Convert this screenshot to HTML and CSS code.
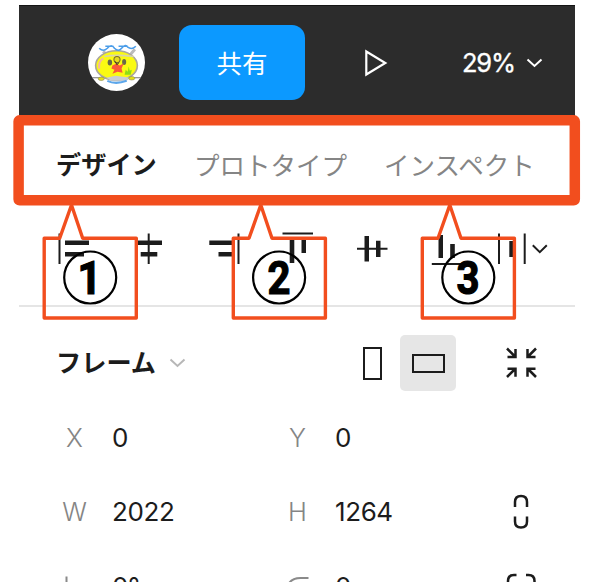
FILE: index.html
```html
<!DOCTYPE html>
<html lang="ja">
<head>
<meta charset="utf-8">
<title>デザインパネル</title>
<link rel="stylesheet" href="styles.css">
</head>
<body>
<main class="panel">
  <header class="header">
    <svg class="avatar" viewBox="0 0 56 56">
      <circle cx="28" cy="28" r="28" fill="#fff"/>
      <path d="M4 43h48" stroke="#777" stroke-width="1"/>
      <path d="M15 17l4 5M46 15l-5 6" stroke="#bbb" stroke-width="3"/>
      <ellipse cx="28" cy="31" rx="20.5" ry="14.5" fill="#fafa12" stroke="#aaa69d" stroke-width="1.6"/>
      <path d="M16 22q12-2 29 0" stroke="#d6d3ae" stroke-width="1.5" fill="none"/>
      <path d="M11 14q4 4 8 0q4-5 7 0q4 4 7 0q4-5 6-1q4 3 8-1M17 12h8M30 12h9" fill="none" stroke="#4b9de9" stroke-width="1.5"/>
      <path d="M11 34q-1-7 4-10" stroke="#f1b8a2" stroke-width="2" fill="none"/>
      <ellipse cx="21.500" cy="28" rx="2.200" ry="3" fill="#686849"/><ellipse cx="35.500" cy="27.500" rx="2" ry="3" fill="#686849"/>
      <circle cx="28.500" cy="25" r="3" fill="#e8dc1d" stroke="#776a2d"/>
      <path d="M24 31l4-2 3 2 4-2-2 5 1 4-5-1-5 2 2-4-3-1z" fill="#fa5938"/>
      <path d="M26.500 27l2 3 2-2" stroke="#412f28" fill="none"/>
      <path d="M36 40l1-5 2 2 1-5 1 4 2-1-1 5z" fill="#8edd16"/>
      <path d="M18 43l9-2 15 2-4 3H23z" fill="#c9cdd0"/>
      <path d="M19 46q8 4 19 0" fill="none" stroke="#5ba6eb" stroke-width="2"/>
      <ellipse cx="13" cy="44" rx="3" ry="1.700" fill="#e4df13" stroke="#8a8958" stroke-width=".6"/><ellipse cx="43" cy="43.500" rx="3" ry="1.700" fill="#e4df13" stroke="#8a8958" stroke-width=".6"/>
    </svg>
    <button class="share">共有</button>
    <svg class="play" viewBox="0 0 24 28"><path d="M2.300 2.500v23l19-11.500z"/></svg>
    <span class="zoom">29%</span>
    <svg class="chevron" viewBox="0 0 17 10"><path d="M1.500 1.500l7 6.500 7-6.500"/></svg>
  </header>

  <nav class="tabs">
    <span class="tab active">デザイン</span>
    <span class="tab prototype">プロトタイプ</span>
    <span class="tab inspect">インスペクト</span>
  </nav>

  <section class="align">
    <svg viewBox="54 228 40 40"><path d="M58.500 233.500h2v30.500h-2zM65 240.500h24v4.500h-24zM65 252h19v4.500h-19z"/></svg>
    <svg viewBox="129 228 40 40"><path d="M147.700 233.500h2v30.500h-2zM136 240.500h26v4.500h-26zM140.700 252h16.600v4.500h-16.600z"/></svg>
    <svg viewBox="204 228 40 40"><path d="M237.500 233.500h2v30.500h-2zM209.300 240.500h23.700v4.500h-23.700zM218.500 252h14.500v4.500h-14.500z"/></svg>
    <svg viewBox="278 228 40 40"><path d="M282.500 232.500h30.500v2h-30.500zM289.700 239.500h4.600v23.500h-4.600zM301.500 239.500h4.500v13.500h-4.500z"/></svg>
    <svg viewBox="353 228 40 40"><path d="M357 247.700h30.500v2h-30.500zM364.500 236h4.500v25.500h-4.500zM376 240.800h4.500v16.200h-4.500z"/></svg>
    <svg viewBox="428 228 40 40"><path d="M431.800 263h30.200v2h-30.200zM438.500 235h4.500v23h-4.500zM450.200 244h4.600v14h-4.600z"/></svg>
    <svg class="distribute" viewBox="494 228 56 40"><path d="M498 233.500h2v30.500h-2zM523.700 233.500h2v30.500h-2zM509.300 241h4.500v16h-4.500z"/><path class="line" d="M532.800 245.300l7 6.900 7-6.900"/></svg>
  </section>

  <section class="frame-row">
    <strong class="frame-title">フレーム</strong>
    <svg class="chevron muted" viewBox="0 0 17 10"><path d="M1.500 1.500l7 6.500 7-6.500"/></svg>
    <span class="orientation portrait"><i></i></span>
    <span class="orientation landscape"><i></i></span>
    <svg class="fit" viewBox="506 347 31 31"><path d="M507 348.500l8 8M507.500 357h8v-8M536 348.500l-8 8M535.500 357h-8v-8M507 377l8-8M507.500 368.700h8v8M536 377l-8-8M535.500 368.700h-8v8"/></svg>
  </section>

  <section class="fields">
    <label>X</label><span>0</span><label>Y</label><span>0</span><b></b>
    <label>W</label><span>2022</span><label>H</label><span>1264</span>
    <svg class="link" viewBox="512 494 18 36"><path d="M515 507v-5q0-6 6-6t6 6v5M515 516.500v5q0 6 6 6t6-6v-5"/></svg>
    <svg class="angle" viewBox="64 570 20 28"><path d="M66.500 574.500v20h15"/></svg><span>0°</span>
    <svg class="radius" viewBox="286 570 25 28"><path d="M286.500 590v-2q2-12 14-12h8"/></svg><span>0</span>
    <svg class="corners" viewBox="506 570 31 31"><path d="M508 584v-4q0-6 6-6h2.500M526 574h2.500q6 0 6 6v4"/></svg>
  </section>
</main>

<svg class="annotations" viewBox="0 0 594 582">
  <rect class="outline" x="18.600" y="120.300" width="556.200" height="80" rx="1"/>
  <g>
    <path class="bubble" d="M44.200 238.300H59.700L71.500 205L82.700 238.300H136.300V318H44.200z"/>
    <circle cx="90.200" cy="277.500" r="26"/>
    <text x="77.500" y="293.700" textLength="24" lengthAdjust="spacingAndGlyphs">1</text>
  </g>
  <g>
    <path class="bubble" d="M233.300 238.300H249L260.800 205L272 238.300H325.400V318H233.300z"/>
    <circle cx="279.100" cy="277.500" r="26"/>
    <text x="267.500" y="293.700" textLength="23" lengthAdjust="spacingAndGlyphs">2</text>
  </g>
  <g>
    <path class="bubble" d="M422.300 238.300H438L449.800 205L461 238.300H514.400V318H422.300z"/>
    <circle cx="468.300" cy="277.500" r="26"/>
    <text x="456.500" y="293.700" textLength="23" lengthAdjust="spacingAndGlyphs">3</text>
  </g>
</svg>
</body>
</html>
```
FILE: styles.css
```css
* { box-sizing: border-box; }
body {
  position: relative;
  width: 594px;
  height: 582px;
  margin: 0;
  overflow: hidden;
  background: #fff;
  color: #1c1c1c;
  font-family: Inter, "Noto Sans CJK JP", sans-serif;
  font-size: 26px;
}
svg { display: block; flex: none; }
.panel { width: 556px; height: 582px; overflow: hidden; margin-left: 19px; padding-top: 5px; }
.header {
  display: flex;
  align-items: center;
  height: 112px;
  padding: 0 0 0 69px;
  border-top: 1px solid #151515;
  background: #2c2c2c;
  color: #fff;
}
.avatar { width: 57px; height: 57px; margin-top: 2px; }
.share {
  width: 126px;
  height: 75px;
  margin: 2px 0 0 34px;
  padding: 0 0 3px;
  border: 0;
  border-radius: 13px;
  background: #0c99ff;
  color: #fff;
  font: 400 25.500px "Noto Sans CJK JP", sans-serif;
}
.play { width: 24px; height: 28px; margin: 2px 0 0 59px; }
.play path { fill: none; stroke: #fff; stroke-width: 2.200; }
.zoom { width: 52px; margin: 2px 0 0 74px; font-size: 25.500px; letter-spacing: -1.200px; white-space: nowrap; -webkit-text-stroke: .3px; }
.chevron { width: 17px; height: 10px; margin: 3px 0 0 12px; }
.chevron path { fill: none; stroke: currentColor; stroke-width: 2; }
.tabs {
  display: flex;
  align-items: center;
  height: 89px;
  padding: 3px 0 0 37px;
  font-size: 25.500px;
}
.tab { width: 139px; color: #858585; white-space: nowrap; }
.tab.active { color: #1c1c1c; font-size: 25.200px; font-weight: 700; }
.tab.prototype { width: 190px; margin-left: -1px; }
.tab.inspect { width: 153px; }
.align {
  display: flex;
  gap: 34.800px;
  height: 101px;
  padding: 22px 0 0 35px;
  border-bottom: 2px solid #e5e5e5;
}
.align svg { width: 40px; height: 40px; fill: #1c1c1c; }
.align .distribute { width: 56px; margin-left: -9px; }
.align .line { fill: none; stroke: #1c1c1c; stroke-width: 2; }
.frame-row {
  display: flex;
  align-items: flex-start;
  height: 93px;
  padding: 28px 0 0 37px;
}
.frame-title { width: 101px; line-height: 57px; font-size: 25.200px; white-space: nowrap; }
.frame-row .chevron { margin: 23px 0 0 12px; }
.chevron.muted { color: #b7b7b7; }
.orientation {
  display: flex;
  align-items: center;
  justify-content: center;
  width: 56px;
  height: 56px;
  border-radius: 5px;
}
.portrait { margin-left: 158px; }
.orientation i { width: 19px; height: 33px; border: 2px solid #1c1c1c; }
.portrait i { margin-left: 1px; }
.landscape { background: #e6e6e6; }
.landscape i { width: 33px; height: 19px; }
.fit { width: 31px; height: 31px; margin: 12px 0 0 50px; }
.fit path, .link path, .corners path { fill: none; stroke: #1c1c1c; stroke-width: 2.500; }
.fields {
  display: grid;
  grid-template-columns: 38px 185px 38px 173px 50px;
  grid-auto-rows: 74.500px;
  align-items: center;
  margin-left: 37px;
  padding-left: 18px;
}
.fields span { letter-spacing: -.4px; }
.fields label { width: 38px; color: #858585; font-size: 25.500px; font-weight: 300; text-align: center; margin-left: -18.500px; }
.fields svg { justify-self: start; }
.fields .link { width: 18px; height: 36px; margin-left: 4px; }
.fields .angle { width: 20px; height: 28px; margin-left: -10px; }
.fields .radius { width: 25px; height: 28px; margin-left: -11px; }
.angle path, .radius path { fill: none; stroke: #8a8a8a; stroke-width: 2; }
.fields .corners { width: 31px; height: 31px; margin-left: -2px; }
.annotations { position: absolute; inset: 0; width: 594px; height: 582px; }
.outline { fill: none; stroke: #f24e1e; stroke-width: 10.500; stroke-linejoin: round; }
.bubble { fill: none; stroke: #f24e1e; stroke-width: 3.400; stroke-linejoin: round; }
.annotations circle { fill: none; stroke: #000; stroke-width: 2.200; }
.annotations text { fill: #000; stroke: #000; stroke-width: 1.200; font: 700 46px Roboto, sans-serif; }
```
